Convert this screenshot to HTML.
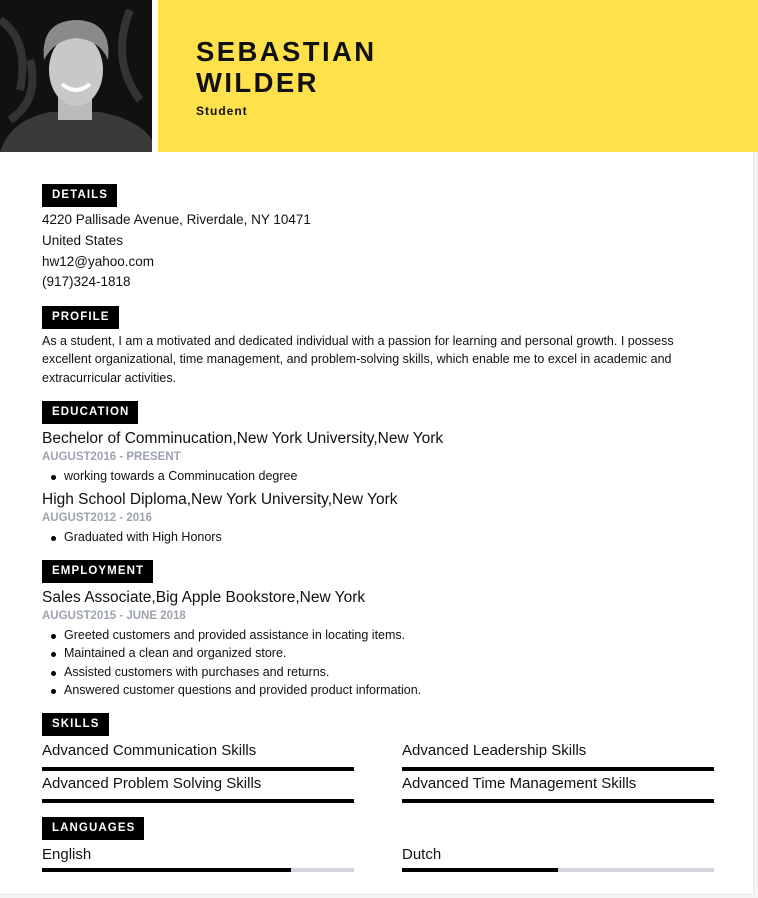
<!DOCTYPE html>
<html><head><meta charset="utf-8"><style>
*{margin:0;padding:0;box-sizing:border-box}
body{width:758px;height:898px;background:#f3f4f6;font-family:"Liberation Sans",sans-serif;color:#111;position:relative;overflow:hidden}
.page{position:absolute;left:0;top:0;width:754px;height:895px;background:#fff;border-right:1px solid #e5e7eb;border-bottom:1px solid #e5e7eb}
.a{position:absolute;white-space:nowrap}
.h{position:absolute;left:42px;height:23px;background:#000;color:#fff;font-weight:bold;font-size:11.5px;letter-spacing:1.1px;line-height:23px;padding:0 9px 0 10px}
.t{font-size:13.5px;left:42px}
.p{font-size:12.5px;left:42px}
.j{font-size:15.5px;left:42px}
.d{font-size:11.5px;left:42px;color:#9ca3af;font-weight:bold}
.b{font-size:12.5px;left:64px}
.b:before{content:"";position:absolute;left:-13px;top:6px;width:5px;height:5px;border-radius:50%;background:#000}
.bar{position:absolute;height:4px;background:#000;width:312px}
.lb{position:absolute;height:4px;background:#d1d5db;width:312px}
</style></head><body><div class="page">
<svg class="a" style="left:0;top:0" width="152" height="152" viewBox="0 0 152 152">
<rect width="152" height="152" fill="#111"/>
<path d="M0 20 Q30 40 20 90 M130 10 Q110 60 140 100 M10 120 Q40 100 30 60" stroke="#333" stroke-width="8" fill="none"/>
<path d="M0 152 Q10 120 50 112 L100 112 Q140 120 152 140 L152 152Z" fill="#3a3a3a"/>
<rect x="58" y="90" width="34" height="30" fill="#bbb"/>
<ellipse cx="76" cy="70" rx="27" ry="36" fill="#c8c8c8"/>
<path d="M44 60 Q40 20 78 20 Q112 22 108 60 Q100 40 76 38 Q54 40 44 60Z" fill="#8a8a8a"/>
<path d="M62 84 Q76 96 90 84" stroke="#fff" stroke-width="4" fill="none"/>
</svg>
<div class="a" style="left:158px;top:0;width:600px;height:152px;background:#ffe14c"></div>
<div class="a" style="left:196px;top:36px;font-size:27.5px;font-weight:bold;letter-spacing:2.4px;line-height:31px">SEBASTIAN<br>WILDER</div>
<div class="a" style="left:196px;top:104px;font-size:12px;font-weight:bold;letter-spacing:1px">Student</div>

<div class="h" style="top:184px">DETAILS</div>
<div class="a t" style="top:212px">4220 Pallisade Avenue, Riverdale, NY 10471</div>
<div class="a t" style="top:233px">United States</div>
<div class="a t" style="top:254px">hw12@yahoo.com</div>
<div class="a t" style="top:274px">(917)324-1818</div>

<div class="h" style="top:306px">PROFILE</div>
<div class="a p" style="top:334px">As a student, I am a motivated and dedicated individual with a passion for learning and personal growth. I possess</div>
<div class="a p" style="top:352px">excellent organizational, time management, and problem-solving skills, which enable me to excel in academic and</div>
<div class="a p" style="top:371px">extracurricular activities.</div>

<div class="h" style="top:401px">EDUCATION</div>
<div class="a j" style="top:430px">Bechelor of Comminucation,New York University,New York</div>
<div class="a d" style="top:451px">AUGUST2016 - PRESENT</div>
<div class="a b" style="top:469px">working towards a Comminucation degree</div>
<div class="a j" style="top:491px">High School Diploma,New York University,New York</div>
<div class="a d" style="top:512px">AUGUST2012 - 2016</div>
<div class="a b" style="top:530px">Graduated with High Honors</div>

<div class="h" style="top:560px">EMPLOYMENT</div>
<div class="a j" style="top:589px">Sales Associate,Big Apple Bookstore,New York</div>
<div class="a d" style="top:610px">AUGUST2015 - JUNE 2018</div>
<div class="a b" style="top:628px">Greeted customers and provided assistance in locating items.</div>
<div class="a b" style="top:646px">Maintained a clean and organized store.</div>
<div class="a b" style="top:665px">Assisted customers with purchases and returns.</div>
<div class="a b" style="top:683px">Answered customer questions and provided product information.</div>

<div class="h" style="top:713px">SKILLS</div>
<div class="a t" style="top:742px;font-size:15px">Advanced Communication Skills</div>
<div class="a t" style="top:742px;left:402px;font-size:15px">Advanced Leadership Skills</div>
<div class="bar" style="left:42px;top:767px"></div>
<div class="bar" style="left:402px;top:767px"></div>
<div class="a t" style="top:775px;font-size:15px">Advanced Problem Solving Skills</div>
<div class="a t" style="top:775px;left:402px;font-size:15px">Advanced Time Management Skills</div>
<div class="bar" style="left:42px;top:799px"></div>
<div class="bar" style="left:402px;top:799px"></div>

<div class="h" style="top:817px">LANGUAGES</div>
<div class="a t" style="top:846px;font-size:15px">English</div>
<div class="a t" style="top:846px;left:402px;font-size:15px">Dutch</div>
<div class="lb" style="left:42px;top:868px"></div>
<div class="bar" style="left:42px;top:868px;width:249px"></div>
<div class="lb" style="left:402px;top:868px"></div>
<div class="bar" style="left:402px;top:868px;width:156px"></div>
</div></body></html>
